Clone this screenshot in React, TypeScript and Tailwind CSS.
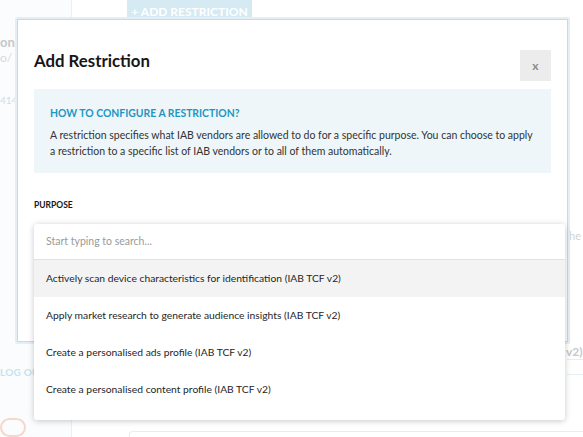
import React from "react";

const options = [
  "Actively scan device characteristics for identification (IAB TCF v2)",
  "Apply market research to generate audience insights (IAB TCF v2)",
  "Create a personalised ads profile (IAB TCF v2)",
  "Create a personalised content profile (IAB TCF v2)",
];

function Backdrop() {
  return (
    <div className="absolute inset-0 flex">
      <aside className="flex w-[72px] flex-col border-r border-[#e8f1f5] bg-[#fbfcfd] pt-[34px]">
        <span className="text-[13px] font-bold leading-4 text-[#c4c8cc]">on</span>
        <span className="text-[12px] leading-4 text-[#d6d9dc]">o/</span>
        <span className="mt-[26px] text-[10px] leading-4 text-[#c6e0ec]">414</span>
        <span className="mt-[256px] text-[10px] font-bold leading-4 tracking-wide text-[#c8e2ee]">LOG OUT</span>
        <div className="mt-[38px] h-[26px] w-[26px] rounded-full border-2 border-[#f6d8c8]" />
      </aside>
      <main className="relative flex-1 bg-white">
        <div className="ml-[55px] flex h-[19px] w-[125px] items-end justify-center bg-[#d5eaf3] pb-[1px]">
          <span className="text-[12px] font-bold leading-none text-white">+ ADD RESTRICTION</span>
        </div>
        <div className="absolute right-0 top-[228px] w-[14px] text-[11px] text-[#d0d3d6]">he</div>
        <div className="absolute right-0 top-[343px] w-[17px] text-[12px] font-bold text-[#c4c8cc]">v2)</div>
        <div className="absolute right-0 top-[359px] h-px w-[16px] bg-[#e3eff5]" />
        <div className="absolute right-0 top-[374px] h-px w-[16px] bg-[#e3eff5]" />
        <div className="absolute bottom-0 left-[57px] h-[6px] w-[460px] rounded-t border border-b-0 border-[#e3eff5]" />
      </main>
    </div>
  );
}

function PurposeDropdown() {
  return (
    <div className="absolute left-0 top-0 w-[531px] rounded-[3px] bg-white pb-[12px] shadow-[0_1px_6px_rgba(0,0,0,0.22)]">
      <div className="flex h-[36px] items-center border-b border-[#e2e2e2] px-3 text-[10.5px] text-[#9a9a9a]">
        Start typing to search...
      </div>
      {options.map((opt, i) => (
        <div
          key={opt}
          className={
            i === 0
              ? "flex h-[37px] items-center bg-[#f3f3f3] px-3 text-[10.3px] text-[#262626]"
              : "flex h-[37px] items-center px-3 text-[10.3px] text-[#262626]"
          }
        >
          {opt}
        </div>
      ))}
    </div>
  );
}

export default function App() {
  return (
    <div
      className="relative h-[437px] w-[583px] overflow-hidden bg-white"
      style={{ fontFamily: "Lato, 'Open Sans', sans-serif" }}
    >
      <Backdrop />
      <div className="absolute left-[15px] top-[17px] h-[327px] w-[555px] rounded-[2px] border-2 border-[#e4eff5]">
        <div className="h-full w-full border border-[#d6d6d6] bg-white px-[16px]">
          <div className="flex items-start justify-between pt-[29px]">
            <h2 className="text-[16.8px] font-bold leading-6 text-[#161616]">Add Restriction</h2>
            <button className="mt-[1px] flex h-[31px] w-[31px] items-center justify-center bg-[#ececec] text-[12px] font-bold text-[#8a8a8a]">
              x
            </button>
          </div>
          <div className="mt-[8px] bg-[#eef6fa] px-[16px] pb-[14px] pt-[16px]">
            <h3 className="text-[10.4px] font-bold leading-4 text-[#2196c4]">
              HOW TO CONFIGURE A RESTRICTION?
            </h3>
            <p className="mt-[6px] whitespace-nowrap text-[10.5px] leading-4 text-[#333]">
              A restriction specifies what IAB vendors are allowed to do for a specific purpose. You can choose to apply
              <br />
              a restriction to a specific list of IAB vendors or to all of them automatically.
            </p>
          </div>
          <div className="mt-[26px] text-[8.5px] font-bold leading-3 text-[#161616]">PURPOSE</div>
          <div className="relative mt-[13px]">
            <PurposeDropdown />
          </div>
        </div>
      </div>
    </div>
  );
}
